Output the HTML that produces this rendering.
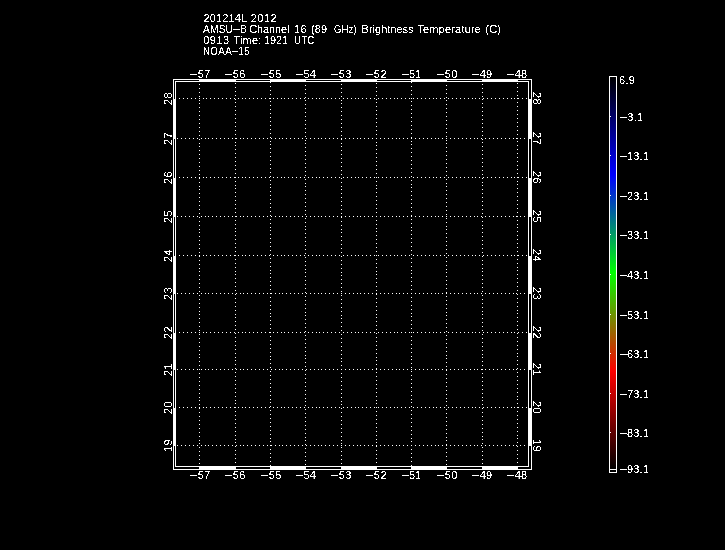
<!DOCTYPE html>
<html><head><meta charset="utf-8"><title>AMSU-B Channel 16 (89 GHz) Brightness Temperature</title>
<style>
html,body{margin:0;padding:0;background:#000;}
body{width:725px;height:550px;position:relative;overflow:hidden;color:#fff;
 font-family:"Liberation Sans",sans-serif;font-size:11px;line-height:11px;}
div,span{position:absolute;white-space:nowrap;}
#tx{left:0;top:0;width:725px;height:550px;filter:url(#th);will-change:transform;}
.w{background:#fff;}
.t{left:0;height:11px;}
.t>span{top:0;transform-origin:0 0;}
span.m{position:static;display:inline-block;width:7.4px;text-align:center;letter-spacing:0;transform:translateY(-1.5px) scaleX(2.6);}
.xl{height:11px;transform-origin:0 0;}
.yl{width:40px;height:11px;text-align:center;font-size:11px;letter-spacing:0.3px;}
.cl{height:11px;transform-origin:0 0;}
</style></head><body>
<svg width="0" height="0" style="position:absolute"><defs><filter id="th" x="0" y="0" width="100%" height="100%" color-interpolation-filters="sRGB"><feComponentTransfer><feFuncR type="discrete" tableValues="1 1"/><feFuncG type="discrete" tableValues="1 1"/><feFuncB type="discrete" tableValues="1 1"/><feFuncA type="linear" slope="200" intercept="-100.00"/></feComponentTransfer></filter></defs></svg>
<svg width="725" height="550" viewBox="0 0 725 550" style="position:absolute;left:0;top:0" shape-rendering="crispEdges"><path fill="none" stroke="#fff" stroke-width="1" stroke-linecap="square" d="M199.5 84.5h0m0 4h0m0 4h0m0 4h0m0 4h0m0 3h0m0 4h0m0 4h0m0 4h0m0 4h0m0 4h0m0 4h0m0 4h0m0 4h0m0 4h0m0 4h0m0 3h0m0 4h0m0 4h0m0 4h0m0 4h0m0 4h0m0 4h0m0 4h0m0 4h0m0 4h0m0 4h0m0 3h0m0 4h0m0 4h0m0 4h0m0 4h0m0 4h0m0 4h0m0 4h0m0 4h0m0 4h0m0 4h0m0 3h0m0 4h0m0 4h0m0 4h0m0 4h0m0 4h0m0 4h0m0 4h0m0 4h0m0 4h0m0 3h0m0 4h0m0 4h0m0 4h0m0 4h0m0 4h0m0 4h0m0 4h0m0 4h0m0 4h0m0 4h0m0 3h0m0 4h0m0 4h0m0 4h0m0 4h0m0 4h0m0 4h0m0 4h0m0 4h0m0 4h0m0 4h0m0 3h0m0 4h0m0 4h0m0 4h0m0 4h0m0 4h0m0 4h0m0 4h0m0 4h0m0 4h0m0 4h0m0 3h0m0 4h0m0 4h0m0 4h0m0 4h0m0 4h0m0 4h0m0 4h0m0 4h0m0 4h0m0 4h0m0 3h0m0 4h0m0 4h0m0 4h0m0 4h0m0 4h0M235.5 83.5h0m0 4h0m0 4h0m0 4h0m0 4h0m0 3h0m0 4h0m0 4h0m0 4h0m0 4h0m0 4h0m0 4h0m0 4h0m0 4h0m0 4h0m0 4h0m0 3h0m0 4h0m0 4h0m0 4h0m0 4h0m0 4h0m0 4h0m0 4h0m0 4h0m0 4h0m0 4h0m0 3h0m0 4h0m0 4h0m0 4h0m0 4h0m0 4h0m0 4h0m0 4h0m0 4h0m0 4h0m0 4h0m0 3h0m0 4h0m0 4h0m0 4h0m0 4h0m0 4h0m0 4h0m0 4h0m0 4h0m0 4h0m0 4h0m0 3h0m0 4h0m0 4h0m0 4h0m0 4h0m0 4h0m0 4h0m0 4h0m0 4h0m0 4h0m0 4h0m0 3h0m0 4h0m0 4h0m0 4h0m0 4h0m0 4h0m0 4h0m0 4h0m0 4h0m0 4h0m0 4h0m0 3h0m0 4h0m0 4h0m0 4h0m0 4h0m0 4h0m0 4h0m0 4h0m0 4h0m0 4h0m0 4h0m0 3h0m0 4h0m0 4h0m0 4h0m0 4h0m0 4h0m0 4h0m0 4h0m0 4h0m0 4h0m0 3h0m0 4h0m0 4h0m0 4h0m0 4h0m0 4h0M270.5 82.5h0m0 4h0m0 4h0m0 4h0m0 4h0m0 3h0m0 4h0m0 4h0m0 4h0m0 4h0m0 4h0m0 4h0m0 4h0m0 4h0m0 4h0m0 4h0m0 3h0m0 4h0m0 4h0m0 4h0m0 4h0m0 4h0m0 4h0m0 4h0m0 4h0m0 4h0m0 4h0m0 3h0m0 4h0m0 4h0m0 4h0m0 4h0m0 4h0m0 4h0m0 4h0m0 4h0m0 4h0m0 4h0m0 3h0m0 4h0m0 4h0m0 4h0m0 4h0m0 4h0m0 4h0m0 4h0m0 4h0m0 4h0m0 4h0m0 3h0m0 4h0m0 4h0m0 4h0m0 4h0m0 4h0m0 4h0m0 4h0m0 4h0m0 4h0m0 4h0m0 3h0m0 4h0m0 4h0m0 4h0m0 4h0m0 4h0m0 4h0m0 4h0m0 4h0m0 4h0m0 4h0m0 3h0m0 4h0m0 4h0m0 4h0m0 4h0m0 4h0m0 4h0m0 4h0m0 4h0m0 4h0m0 4h0m0 3h0m0 4h0m0 4h0m0 4h0m0 4h0m0 4h0m0 4h0m0 4h0m0 4h0m0 4h0m0 3h0m0 4h0m0 4h0m0 4h0m0 4h0m0 4h0m0 4h0M305.5 85.5h0m0 4h0m0 4h0m0 4h0m0 3h0m0 4h0m0 4h0m0 4h0m0 4h0m0 4h0m0 4h0m0 4h0m0 4h0m0 4h0m0 4h0m0 3h0m0 4h0m0 4h0m0 4h0m0 4h0m0 4h0m0 4h0m0 4h0m0 4h0m0 4h0m0 4h0m0 3h0m0 4h0m0 4h0m0 4h0m0 4h0m0 4h0m0 4h0m0 4h0m0 4h0m0 4h0m0 4h0m0 3h0m0 4h0m0 4h0m0 4h0m0 4h0m0 4h0m0 4h0m0 4h0m0 4h0m0 4h0m0 4h0m0 3h0m0 4h0m0 4h0m0 4h0m0 4h0m0 4h0m0 4h0m0 4h0m0 4h0m0 4h0m0 4h0m0 3h0m0 4h0m0 4h0m0 4h0m0 4h0m0 4h0m0 4h0m0 4h0m0 4h0m0 4h0m0 4h0m0 3h0m0 4h0m0 4h0m0 4h0m0 4h0m0 4h0m0 4h0m0 4h0m0 4h0m0 4h0m0 4h0m0 3h0m0 4h0m0 4h0m0 4h0m0 4h0m0 4h0m0 4h0m0 4h0m0 4h0m0 4h0m0 3h0m0 4h0m0 4h0m0 4h0m0 4h0m0 4h0m0 4h0M341.5 84.5h0m0 4h0m0 4h0m0 4h0m0 4h0m0 3h0m0 4h0m0 4h0m0 4h0m0 4h0m0 4h0m0 4h0m0 4h0m0 4h0m0 4h0m0 4h0m0 3h0m0 4h0m0 4h0m0 4h0m0 4h0m0 4h0m0 4h0m0 4h0m0 4h0m0 4h0m0 4h0m0 3h0m0 4h0m0 4h0m0 4h0m0 4h0m0 4h0m0 4h0m0 4h0m0 4h0m0 4h0m0 4h0m0 3h0m0 4h0m0 4h0m0 4h0m0 4h0m0 4h0m0 4h0m0 4h0m0 4h0m0 4h0m0 4h0m0 3h0m0 4h0m0 4h0m0 4h0m0 4h0m0 4h0m0 4h0m0 4h0m0 4h0m0 4h0m0 4h0m0 3h0m0 4h0m0 4h0m0 4h0m0 4h0m0 4h0m0 4h0m0 4h0m0 4h0m0 4h0m0 4h0m0 3h0m0 4h0m0 4h0m0 4h0m0 4h0m0 4h0m0 4h0m0 4h0m0 4h0m0 4h0m0 4h0m0 3h0m0 4h0m0 4h0m0 4h0m0 4h0m0 4h0m0 4h0m0 4h0m0 4h0m0 4h0m0 3h0m0 4h0m0 4h0m0 4h0m0 4h0m0 4h0M376.5 83.5h0m0 4h0m0 4h0m0 4h0m0 4h0m0 3h0m0 4h0m0 4h0m0 4h0m0 4h0m0 4h0m0 4h0m0 4h0m0 4h0m0 4h0m0 4h0m0 3h0m0 4h0m0 4h0m0 4h0m0 4h0m0 4h0m0 4h0m0 4h0m0 4h0m0 4h0m0 4h0m0 3h0m0 4h0m0 4h0m0 4h0m0 4h0m0 4h0m0 4h0m0 4h0m0 4h0m0 4h0m0 4h0m0 3h0m0 4h0m0 4h0m0 4h0m0 4h0m0 4h0m0 4h0m0 4h0m0 4h0m0 4h0m0 4h0m0 3h0m0 4h0m0 4h0m0 4h0m0 4h0m0 4h0m0 4h0m0 4h0m0 4h0m0 4h0m0 4h0m0 3h0m0 4h0m0 4h0m0 4h0m0 4h0m0 4h0m0 4h0m0 4h0m0 4h0m0 4h0m0 4h0m0 3h0m0 4h0m0 4h0m0 4h0m0 4h0m0 4h0m0 4h0m0 4h0m0 4h0m0 4h0m0 4h0m0 3h0m0 4h0m0 4h0m0 4h0m0 4h0m0 4h0m0 4h0m0 4h0m0 4h0m0 4h0m0 3h0m0 4h0m0 4h0m0 4h0m0 4h0m0 4h0M411.5 82.5h0m0 4h0m0 4h0m0 4h0m0 4h0m0 3h0m0 4h0m0 4h0m0 4h0m0 4h0m0 4h0m0 4h0m0 4h0m0 4h0m0 4h0m0 4h0m0 3h0m0 4h0m0 4h0m0 4h0m0 4h0m0 4h0m0 4h0m0 4h0m0 4h0m0 4h0m0 4h0m0 3h0m0 4h0m0 4h0m0 4h0m0 4h0m0 4h0m0 4h0m0 4h0m0 4h0m0 4h0m0 4h0m0 3h0m0 4h0m0 4h0m0 4h0m0 4h0m0 4h0m0 4h0m0 4h0m0 4h0m0 4h0m0 4h0m0 3h0m0 4h0m0 4h0m0 4h0m0 4h0m0 4h0m0 4h0m0 4h0m0 4h0m0 4h0m0 4h0m0 3h0m0 4h0m0 4h0m0 4h0m0 4h0m0 4h0m0 4h0m0 4h0m0 4h0m0 4h0m0 4h0m0 3h0m0 4h0m0 4h0m0 4h0m0 4h0m0 4h0m0 4h0m0 4h0m0 4h0m0 4h0m0 4h0m0 3h0m0 4h0m0 4h0m0 4h0m0 4h0m0 4h0m0 4h0m0 4h0m0 4h0m0 4h0m0 3h0m0 4h0m0 4h0m0 4h0m0 4h0m0 4h0m0 4h0M446.5 85.5h0m0 4h0m0 4h0m0 4h0m0 3h0m0 4h0m0 4h0m0 4h0m0 4h0m0 4h0m0 4h0m0 4h0m0 4h0m0 4h0m0 4h0m0 3h0m0 4h0m0 4h0m0 4h0m0 4h0m0 4h0m0 4h0m0 4h0m0 4h0m0 4h0m0 4h0m0 3h0m0 4h0m0 4h0m0 4h0m0 4h0m0 4h0m0 4h0m0 4h0m0 4h0m0 4h0m0 4h0m0 3h0m0 4h0m0 4h0m0 4h0m0 4h0m0 4h0m0 4h0m0 4h0m0 4h0m0 4h0m0 4h0m0 3h0m0 4h0m0 4h0m0 4h0m0 4h0m0 4h0m0 4h0m0 4h0m0 4h0m0 4h0m0 4h0m0 3h0m0 4h0m0 4h0m0 4h0m0 4h0m0 4h0m0 4h0m0 4h0m0 4h0m0 4h0m0 4h0m0 3h0m0 4h0m0 4h0m0 4h0m0 4h0m0 4h0m0 4h0m0 4h0m0 4h0m0 4h0m0 4h0m0 3h0m0 4h0m0 4h0m0 4h0m0 4h0m0 4h0m0 4h0m0 4h0m0 4h0m0 4h0m0 3h0m0 4h0m0 4h0m0 4h0m0 4h0m0 4h0m0 4h0M482.5 84.5h0m0 4h0m0 4h0m0 4h0m0 3h0m0 4h0m0 4h0m0 4h0m0 4h0m0 4h0m0 4h0m0 4h0m0 4h0m0 4h0m0 4h0m0 3h0m0 4h0m0 4h0m0 4h0m0 4h0m0 4h0m0 4h0m0 4h0m0 4h0m0 4h0m0 4h0m0 3h0m0 4h0m0 4h0m0 4h0m0 4h0m0 4h0m0 4h0m0 4h0m0 4h0m0 4h0m0 4h0m0 3h0m0 4h0m0 4h0m0 4h0m0 4h0m0 4h0m0 4h0m0 4h0m0 4h0m0 4h0m0 4h0m0 3h0m0 4h0m0 4h0m0 4h0m0 4h0m0 4h0m0 4h0m0 4h0m0 4h0m0 4h0m0 4h0m0 3h0m0 4h0m0 4h0m0 4h0m0 4h0m0 4h0m0 4h0m0 4h0m0 4h0m0 4h0m0 4h0m0 3h0m0 4h0m0 4h0m0 4h0m0 4h0m0 4h0m0 4h0m0 4h0m0 4h0m0 4h0m0 4h0m0 3h0m0 4h0m0 4h0m0 4h0m0 4h0m0 4h0m0 4h0m0 4h0m0 4h0m0 4h0m0 3h0m0 4h0m0 4h0m0 4h0m0 4h0m0 4h0m0 4h0M517.5 83.5h0m0 4h0m0 4h0m0 4h0m0 3h0m0 4h0m0 4h0m0 4h0m0 4h0m0 4h0m0 4h0m0 4h0m0 4h0m0 4h0m0 4h0m0 3h0m0 4h0m0 4h0m0 4h0m0 4h0m0 4h0m0 4h0m0 4h0m0 4h0m0 4h0m0 4h0m0 3h0m0 4h0m0 4h0m0 4h0m0 4h0m0 4h0m0 4h0m0 4h0m0 4h0m0 4h0m0 4h0m0 3h0m0 4h0m0 4h0m0 4h0m0 4h0m0 4h0m0 4h0m0 4h0m0 4h0m0 4h0m0 4h0m0 3h0m0 4h0m0 4h0m0 4h0m0 4h0m0 4h0m0 4h0m0 4h0m0 4h0m0 4h0m0 4h0m0 3h0m0 4h0m0 4h0m0 4h0m0 4h0m0 4h0m0 4h0m0 4h0m0 4h0m0 4h0m0 4h0m0 3h0m0 4h0m0 4h0m0 4h0m0 4h0m0 4h0m0 4h0m0 4h0m0 4h0m0 4h0m0 4h0m0 3h0m0 4h0m0 4h0m0 4h0m0 4h0m0 4h0m0 4h0m0 4h0m0 4h0m0 4h0m0 3h0m0 4h0m0 4h0m0 4h0m0 4h0m0 4h0m0 4h0M179.5 98.5h0m4 0h0m4 0h0m4 0h0m4 0h0m4 0h0m4 0h0m3 0h0m4 0h0m4 0h0m4 0h0m4 0h0m4 0h0m4 0h0m4 0h0m4 0h0m4 0h0m3 0h0m4 0h0m4 0h0m4 0h0m4 0h0m4 0h0m4 0h0m4 0h0m4 0h0m4 0h0m3 0h0m4 0h0m4 0h0m4 0h0m4 0h0m4 0h0m4 0h0m4 0h0m4 0h0m3 0h0m4 0h0m4 0h0m4 0h0m4 0h0m4 0h0m4 0h0m4 0h0m4 0h0m4 0h0m3 0h0m4 0h0m4 0h0m4 0h0m4 0h0m4 0h0m4 0h0m4 0h0m4 0h0m4 0h0m3 0h0m4 0h0m4 0h0m4 0h0m4 0h0m4 0h0m4 0h0m4 0h0m4 0h0m4 0h0m3 0h0m4 0h0m4 0h0m4 0h0m4 0h0m4 0h0m4 0h0m4 0h0m4 0h0m4 0h0m3 0h0m4 0h0m4 0h0m4 0h0m4 0h0m4 0h0m4 0h0m4 0h0m4 0h0m4 0h0m3 0h0m4 0h0m4 0h0m4 0h0M177.5 138.5h0m4 0h0m4 0h0m4 0h0m4 0h0m4 0h0m4 0h0m4 0h0m3 0h0m4 0h0m4 0h0m4 0h0m4 0h0m4 0h0m4 0h0m4 0h0m4 0h0m3 0h0m4 0h0m4 0h0m4 0h0m4 0h0m4 0h0m4 0h0m4 0h0m4 0h0m4 0h0m3 0h0m4 0h0m4 0h0m4 0h0m4 0h0m4 0h0m4 0h0m4 0h0m4 0h0m4 0h0m3 0h0m4 0h0m4 0h0m4 0h0m4 0h0m4 0h0m4 0h0m4 0h0m4 0h0m4 0h0m3 0h0m4 0h0m4 0h0m4 0h0m4 0h0m4 0h0m4 0h0m4 0h0m4 0h0m4 0h0m3 0h0m4 0h0m4 0h0m4 0h0m4 0h0m4 0h0m4 0h0m4 0h0m4 0h0m4 0h0m3 0h0m4 0h0m4 0h0m4 0h0m4 0h0m4 0h0m4 0h0m4 0h0m4 0h0m4 0h0m3 0h0m4 0h0m4 0h0m4 0h0m4 0h0m4 0h0m4 0h0m4 0h0m4 0h0m4 0h0m3 0h0m4 0h0m4 0h0M179.5 177.5h0m4 0h0m4 0h0m4 0h0m4 0h0m4 0h0m4 0h0m3 0h0m4 0h0m4 0h0m4 0h0m4 0h0m4 0h0m4 0h0m4 0h0m4 0h0m4 0h0m3 0h0m4 0h0m4 0h0m4 0h0m4 0h0m4 0h0m4 0h0m4 0h0m4 0h0m4 0h0m3 0h0m4 0h0m4 0h0m4 0h0m4 0h0m4 0h0m4 0h0m4 0h0m4 0h0m3 0h0m4 0h0m4 0h0m4 0h0m4 0h0m4 0h0m4 0h0m4 0h0m4 0h0m4 0h0m3 0h0m4 0h0m4 0h0m4 0h0m4 0h0m4 0h0m4 0h0m4 0h0m4 0h0m4 0h0m3 0h0m4 0h0m4 0h0m4 0h0m4 0h0m4 0h0m4 0h0m4 0h0m4 0h0m4 0h0m3 0h0m4 0h0m4 0h0m4 0h0m4 0h0m4 0h0m4 0h0m4 0h0m4 0h0m4 0h0m3 0h0m4 0h0m4 0h0m4 0h0m4 0h0m4 0h0m4 0h0m4 0h0m4 0h0m4 0h0m3 0h0m4 0h0m4 0h0m4 0h0M177.5 216.5h0m4 0h0m4 0h0m4 0h0m4 0h0m4 0h0m4 0h0m4 0h0m3 0h0m4 0h0m4 0h0m4 0h0m4 0h0m4 0h0m4 0h0m4 0h0m4 0h0m3 0h0m4 0h0m4 0h0m4 0h0m4 0h0m4 0h0m4 0h0m4 0h0m4 0h0m4 0h0m3 0h0m4 0h0m4 0h0m4 0h0m4 0h0m4 0h0m4 0h0m4 0h0m4 0h0m4 0h0m3 0h0m4 0h0m4 0h0m4 0h0m4 0h0m4 0h0m4 0h0m4 0h0m4 0h0m4 0h0m3 0h0m4 0h0m4 0h0m4 0h0m4 0h0m4 0h0m4 0h0m4 0h0m4 0h0m4 0h0m3 0h0m4 0h0m4 0h0m4 0h0m4 0h0m4 0h0m4 0h0m4 0h0m4 0h0m4 0h0m3 0h0m4 0h0m4 0h0m4 0h0m4 0h0m4 0h0m4 0h0m4 0h0m4 0h0m4 0h0m3 0h0m4 0h0m4 0h0m4 0h0m4 0h0m4 0h0m4 0h0m4 0h0m4 0h0m4 0h0m3 0h0m4 0h0m4 0h0M179.5 255.5h0m4 0h0m4 0h0m4 0h0m4 0h0m4 0h0m4 0h0m3 0h0m4 0h0m4 0h0m4 0h0m4 0h0m4 0h0m4 0h0m4 0h0m4 0h0m4 0h0m3 0h0m4 0h0m4 0h0m4 0h0m4 0h0m4 0h0m4 0h0m4 0h0m4 0h0m4 0h0m3 0h0m4 0h0m4 0h0m4 0h0m4 0h0m4 0h0m4 0h0m4 0h0m4 0h0m3 0h0m4 0h0m4 0h0m4 0h0m4 0h0m4 0h0m4 0h0m4 0h0m4 0h0m4 0h0m3 0h0m4 0h0m4 0h0m4 0h0m4 0h0m4 0h0m4 0h0m4 0h0m4 0h0m4 0h0m3 0h0m4 0h0m4 0h0m4 0h0m4 0h0m4 0h0m4 0h0m4 0h0m4 0h0m4 0h0m3 0h0m4 0h0m4 0h0m4 0h0m4 0h0m4 0h0m4 0h0m4 0h0m4 0h0m4 0h0m3 0h0m4 0h0m4 0h0m4 0h0m4 0h0m4 0h0m4 0h0m4 0h0m4 0h0m4 0h0m3 0h0m4 0h0m4 0h0m4 0h0M177.5 293.5h0m4 0h0m4 0h0m4 0h0m4 0h0m4 0h0m4 0h0m4 0h0m3 0h0m4 0h0m4 0h0m4 0h0m4 0h0m4 0h0m4 0h0m4 0h0m4 0h0m3 0h0m4 0h0m4 0h0m4 0h0m4 0h0m4 0h0m4 0h0m4 0h0m4 0h0m4 0h0m3 0h0m4 0h0m4 0h0m4 0h0m4 0h0m4 0h0m4 0h0m4 0h0m4 0h0m4 0h0m3 0h0m4 0h0m4 0h0m4 0h0m4 0h0m4 0h0m4 0h0m4 0h0m4 0h0m4 0h0m3 0h0m4 0h0m4 0h0m4 0h0m4 0h0m4 0h0m4 0h0m4 0h0m4 0h0m4 0h0m3 0h0m4 0h0m4 0h0m4 0h0m4 0h0m4 0h0m4 0h0m4 0h0m4 0h0m4 0h0m3 0h0m4 0h0m4 0h0m4 0h0m4 0h0m4 0h0m4 0h0m4 0h0m4 0h0m4 0h0m3 0h0m4 0h0m4 0h0m4 0h0m4 0h0m4 0h0m4 0h0m4 0h0m4 0h0m4 0h0m3 0h0m4 0h0m4 0h0M179.5 332.5h0m4 0h0m4 0h0m4 0h0m4 0h0m4 0h0m4 0h0m3 0h0m4 0h0m4 0h0m4 0h0m4 0h0m4 0h0m4 0h0m4 0h0m4 0h0m4 0h0m3 0h0m4 0h0m4 0h0m4 0h0m4 0h0m4 0h0m4 0h0m4 0h0m4 0h0m4 0h0m3 0h0m4 0h0m4 0h0m4 0h0m4 0h0m4 0h0m4 0h0m4 0h0m4 0h0m3 0h0m4 0h0m4 0h0m4 0h0m4 0h0m4 0h0m4 0h0m4 0h0m4 0h0m4 0h0m3 0h0m4 0h0m4 0h0m4 0h0m4 0h0m4 0h0m4 0h0m4 0h0m4 0h0m4 0h0m3 0h0m4 0h0m4 0h0m4 0h0m4 0h0m4 0h0m4 0h0m4 0h0m4 0h0m4 0h0m3 0h0m4 0h0m4 0h0m4 0h0m4 0h0m4 0h0m4 0h0m4 0h0m4 0h0m4 0h0m3 0h0m4 0h0m4 0h0m4 0h0m4 0h0m4 0h0m4 0h0m4 0h0m4 0h0m4 0h0m3 0h0m4 0h0m4 0h0m4 0h0M177.5 369.5h0m4 0h0m4 0h0m4 0h0m4 0h0m4 0h0m4 0h0m4 0h0m3 0h0m4 0h0m4 0h0m4 0h0m4 0h0m4 0h0m4 0h0m4 0h0m4 0h0m3 0h0m4 0h0m4 0h0m4 0h0m4 0h0m4 0h0m4 0h0m4 0h0m4 0h0m4 0h0m3 0h0m4 0h0m4 0h0m4 0h0m4 0h0m4 0h0m4 0h0m4 0h0m4 0h0m4 0h0m3 0h0m4 0h0m4 0h0m4 0h0m4 0h0m4 0h0m4 0h0m4 0h0m4 0h0m4 0h0m3 0h0m4 0h0m4 0h0m4 0h0m4 0h0m4 0h0m4 0h0m4 0h0m4 0h0m4 0h0m3 0h0m4 0h0m4 0h0m4 0h0m4 0h0m4 0h0m4 0h0m4 0h0m4 0h0m4 0h0m3 0h0m4 0h0m4 0h0m4 0h0m4 0h0m4 0h0m4 0h0m4 0h0m4 0h0m4 0h0m3 0h0m4 0h0m4 0h0m4 0h0m4 0h0m4 0h0m4 0h0m4 0h0m4 0h0m4 0h0m3 0h0m4 0h0m4 0h0M179.5 407.5h0m4 0h0m4 0h0m4 0h0m4 0h0m4 0h0m4 0h0m3 0h0m4 0h0m4 0h0m4 0h0m4 0h0m4 0h0m4 0h0m4 0h0m4 0h0m4 0h0m3 0h0m4 0h0m4 0h0m4 0h0m4 0h0m4 0h0m4 0h0m4 0h0m4 0h0m4 0h0m3 0h0m4 0h0m4 0h0m4 0h0m4 0h0m4 0h0m4 0h0m4 0h0m4 0h0m3 0h0m4 0h0m4 0h0m4 0h0m4 0h0m4 0h0m4 0h0m4 0h0m4 0h0m4 0h0m3 0h0m4 0h0m4 0h0m4 0h0m4 0h0m4 0h0m4 0h0m4 0h0m4 0h0m4 0h0m3 0h0m4 0h0m4 0h0m4 0h0m4 0h0m4 0h0m4 0h0m4 0h0m4 0h0m4 0h0m3 0h0m4 0h0m4 0h0m4 0h0m4 0h0m4 0h0m4 0h0m4 0h0m4 0h0m4 0h0m3 0h0m4 0h0m4 0h0m4 0h0m4 0h0m4 0h0m4 0h0m4 0h0m4 0h0m4 0h0m3 0h0m4 0h0m4 0h0m4 0h0M177.5 445.5h0m4 0h0m4 0h0m4 0h0m4 0h0m4 0h0m4 0h0m4 0h0m3 0h0m4 0h0m4 0h0m4 0h0m4 0h0m4 0h0m4 0h0m4 0h0m4 0h0m3 0h0m4 0h0m4 0h0m4 0h0m4 0h0m4 0h0m4 0h0m4 0h0m4 0h0m4 0h0m3 0h0m4 0h0m4 0h0m4 0h0m4 0h0m4 0h0m4 0h0m4 0h0m4 0h0m4 0h0m3 0h0m4 0h0m4 0h0m4 0h0m4 0h0m4 0h0m4 0h0m4 0h0m4 0h0m4 0h0m3 0h0m4 0h0m4 0h0m4 0h0m4 0h0m4 0h0m4 0h0m4 0h0m4 0h0m4 0h0m3 0h0m4 0h0m4 0h0m4 0h0m4 0h0m4 0h0m4 0h0m4 0h0m4 0h0m4 0h0m3 0h0m4 0h0m4 0h0m4 0h0m4 0h0m4 0h0m4 0h0m4 0h0m4 0h0m4 0h0m3 0h0m4 0h0m4 0h0m4 0h0m4 0h0m4 0h0m4 0h0m4 0h0m4 0h0m4 0h0m3 0h0m4 0h0m4 0h0"/></svg>
<div class="w" style="left:173px;top:79px;width:359px;height:1px"></div>
<div class="w" style="left:175px;top:81px;width:354px;height:1px"></div>
<div class="w" style="left:173px;top:469px;width:359px;height:1px"></div>
<div class="w" style="left:175px;top:466px;width:354px;height:1px"></div>
<div class="w" style="left:173px;top:79px;width:1px;height:391px"></div>
<div class="w" style="left:175px;top:81px;width:1px;height:386px"></div>
<div class="w" style="left:531px;top:79px;width:1px;height:391px"></div>
<div class="w" style="left:528px;top:81px;width:1px;height:386px"></div>
<div class="w" style="left:199px;top:79px;width:37px;height:3px"></div>
<div class="w" style="left:199px;top:466px;width:37px;height:4px"></div>
<div class="w" style="left:173px;top:99px;width:3px;height:40px"></div>
<div class="w" style="left:528px;top:99px;width:4px;height:40px"></div>
<div class="w" style="left:270px;top:79px;width:36px;height:3px"></div>
<div class="w" style="left:270px;top:466px;width:36px;height:4px"></div>
<div class="w" style="left:173px;top:178px;width:3px;height:39px"></div>
<div class="w" style="left:528px;top:178px;width:4px;height:39px"></div>
<div class="w" style="left:341px;top:79px;width:36px;height:3px"></div>
<div class="w" style="left:341px;top:466px;width:36px;height:4px"></div>
<div class="w" style="left:173px;top:256px;width:3px;height:38px"></div>
<div class="w" style="left:528px;top:256px;width:4px;height:38px"></div>
<div class="w" style="left:411px;top:79px;width:36px;height:3px"></div>
<div class="w" style="left:411px;top:466px;width:36px;height:4px"></div>
<div class="w" style="left:173px;top:333px;width:3px;height:37px"></div>
<div class="w" style="left:528px;top:333px;width:4px;height:37px"></div>
<div class="w" style="left:482px;top:79px;width:36px;height:3px"></div>
<div class="w" style="left:482px;top:466px;width:36px;height:4px"></div>
<div class="w" style="left:173px;top:408px;width:3px;height:38px"></div>
<div class="w" style="left:528px;top:408px;width:4px;height:38px"></div>
<div style="left:610px;top:77px;width:6px;height:392px;background:linear-gradient(to bottom,#000 0%,#00f 25%,#0f0 50%,#f00 75%,#000 100%)"></div>
<div class="w" style="left:609px;top:76px;width:1px;height:397px"></div>
<div class="w" style="left:616px;top:76px;width:1px;height:397px"></div>
<div class="w" style="left:609px;top:76px;width:8px;height:1px"></div>
<div class="w" style="left:609px;top:472px;width:8px;height:1px"></div>
<div class="w" style="left:609px;top:469px;width:8px;height:1px"></div>
<div class="w" style="left:610px;top:116px;width:1px;height:1px"></div>
<div class="w" style="left:610px;top:155px;width:1px;height:1px"></div>
<div class="w" style="left:610px;top:195px;width:1px;height:1px"></div>
<div class="w" style="left:610px;top:234px;width:1px;height:1px"></div>
<div class="w" style="left:610px;top:274px;width:1px;height:1px"></div>
<div class="w" style="left:610px;top:314px;width:1px;height:1px"></div>
<div class="w" style="left:610px;top:353px;width:1px;height:1px"></div>
<div class="w" style="left:610px;top:393px;width:1px;height:1px"></div>
<div class="w" style="left:610px;top:432px;width:1px;height:1px"></div>
<div id="tx">
<div class="t" style="top:13.0px"><span id="t0_0" style="left:203.60px;letter-spacing:0.100px">201214L</span> <span id="t0_1" style="left:250.70px;letter-spacing:0.500px">2012</span></div>
<div class="t" style="top:24.0px"><span id="t1_0" style="left:202.60px;letter-spacing:0.250px;transform:scaleX(0.9200)">AMSU<span class="m">-</span>B</span> <span id="t1_1" style="left:249.20px;letter-spacing:-0.118px">Channel</span> <span id="t1_2" style="left:294.10px;letter-spacing:0.200px">16</span> <span id="t1_3" style="left:310.90px;letter-spacing:0.200px">(89</span> <span id="t1_4" style="left:333.60px;letter-spacing:0.250px;transform:scaleX(0.8600)">GHz)</span> <span id="t1_5" style="left:361.60px;letter-spacing:0.000px">Brightness</span> <span id="t1_6" style="left:417.20px;letter-spacing:0.200px">Temperature</span> <span id="t1_7" style="left:485.30px;letter-spacing:0.200px">(C)</span></div>
<div class="t" style="top:35.0px"><span id="t2_0" style="left:203.20px;letter-spacing:0.500px">0913</span> <span id="t2_1" style="left:233.40px;letter-spacing:0.200px">Time:</span> <span id="t2_2" style="left:263.90px;letter-spacing:-0.118px">1921</span> <span id="t2_3" style="left:293.60px;letter-spacing:0.250px;transform:scaleX(0.8800)">UTC</span></div>
<div class="t" style="top:46.0px"><span id="t3_0" style="left:202.60px;letter-spacing:0.250px;transform:scaleX(0.9000)">NOAA<span class="m">-</span>15</span></div>
<div class="xl" id="xt0" style="top:69.0px;left:190.30px;letter-spacing:0.2000px"><span class="m">-</span>57</div>
<div class="xl" id="xb0" style="top:470.0px;left:190.30px;letter-spacing:0.2000px"><span class="m">-</span>57</div>
<div class="xl" id="xt1" style="top:69.0px;left:225.40px;letter-spacing:0.3000px"><span class="m">-</span>56</div>
<div class="xl" id="xb1" style="top:470.0px;left:225.40px;letter-spacing:0.3000px"><span class="m">-</span>56</div>
<div class="xl" id="xt2" style="top:69.0px;left:261.40px;letter-spacing:0.3000px"><span class="m">-</span>55</div>
<div class="xl" id="xb2" style="top:470.0px;left:261.40px;letter-spacing:0.3000px"><span class="m">-</span>55</div>
<div class="xl" id="xt3" style="top:69.0px;left:296.00px;letter-spacing:0.2000px"><span class="m">-</span>54</div>
<div class="xl" id="xb3" style="top:470.0px;left:296.00px;letter-spacing:0.2000px"><span class="m">-</span>54</div>
<div class="xl" id="xt4" style="top:69.0px;left:331.40px;letter-spacing:0.3000px"><span class="m">-</span>53</div>
<div class="xl" id="xb4" style="top:470.0px;left:331.40px;letter-spacing:0.3000px"><span class="m">-</span>53</div>
<div class="xl" id="xt5" style="top:69.0px;left:366.40px;letter-spacing:0.5000px"><span class="m">-</span>52</div>
<div class="xl" id="xb5" style="top:470.0px;left:366.40px;letter-spacing:0.5000px"><span class="m">-</span>52</div>
<div class="xl" id="xt6" style="top:69.0px;left:401.50px;letter-spacing:0.1000px"><span class="m">-</span>51</div>
<div class="xl" id="xb6" style="top:470.0px;left:401.50px;letter-spacing:0.1000px"><span class="m">-</span>51</div>
<div class="xl" id="xt7" style="top:69.0px;left:437.40px;letter-spacing:0.3000px"><span class="m">-</span>50</div>
<div class="xl" id="xb7" style="top:470.0px;left:437.40px;letter-spacing:0.3000px"><span class="m">-</span>50</div>
<div class="xl" id="xt8" style="top:69.0px;left:472.30px;letter-spacing:0.2000px"><span class="m">-</span>49</div>
<div class="xl" id="xb8" style="top:470.0px;left:472.30px;letter-spacing:0.2000px"><span class="m">-</span>49</div>
<div class="xl" id="xt9" style="top:69.0px;left:507.30px;letter-spacing:0.2000px"><span class="m">-</span>48</div>
<div class="xl" id="xb9" style="top:470.0px;left:507.30px;letter-spacing:0.2000px"><span class="m">-</span>48</div>
<div class="yl" id="yl0" style="left:147.5px;top:93.0px;transform:rotate(-90deg)">28</div>
<div class="yl" id="yr0" style="left:515.7px;top:93.0px;transform:rotate(90deg)">28</div>
<div class="yl" id="yl1" style="left:147.5px;top:133.0px;transform:rotate(-90deg)">27</div>
<div class="yl" id="yr1" style="left:515.7px;top:133.0px;transform:rotate(90deg)">27</div>
<div class="yl" id="yl2" style="left:147.5px;top:172.0px;transform:rotate(-90deg)">26</div>
<div class="yl" id="yr2" style="left:515.7px;top:172.0px;transform:rotate(90deg)">26</div>
<div class="yl" id="yl3" style="left:147.5px;top:211.0px;transform:rotate(-90deg)">25</div>
<div class="yl" id="yr3" style="left:515.7px;top:211.0px;transform:rotate(90deg)">25</div>
<div class="yl" id="yl4" style="left:147.5px;top:250.0px;transform:rotate(-90deg)">24</div>
<div class="yl" id="yr4" style="left:515.7px;top:250.0px;transform:rotate(90deg)">24</div>
<div class="yl" id="yl5" style="left:147.5px;top:288.0px;transform:rotate(-90deg)">23</div>
<div class="yl" id="yr5" style="left:515.7px;top:288.0px;transform:rotate(90deg)">23</div>
<div class="yl" id="yl6" style="left:147.5px;top:327.0px;transform:rotate(-90deg)">22</div>
<div class="yl" id="yr6" style="left:515.7px;top:327.0px;transform:rotate(90deg)">22</div>
<div class="yl" id="yl7" style="left:147.5px;top:364.0px;transform:rotate(-90deg)">21</div>
<div class="yl" id="yr7" style="left:515.7px;top:364.0px;transform:rotate(90deg)">21</div>
<div class="yl" id="yl8" style="left:147.5px;top:402.0px;transform:rotate(-90deg)">20</div>
<div class="yl" id="yr8" style="left:515.7px;top:402.0px;transform:rotate(90deg)">20</div>
<div class="yl" id="yl9" style="left:147.5px;top:440.0px;transform:rotate(-90deg)">19</div>
<div class="yl" id="yr9" style="left:515.7px;top:440.0px;transform:rotate(90deg)">19</div>
<div class="cl" id="cb0" style="top:75.0px;left:619.10px;letter-spacing:0.2000px">6.9</div>
<div class="cl" id="cb1" style="top:112.0px;left:619.90px;letter-spacing:0.3000px"><span class="m">-</span>3.1</div>
<div class="cl" id="cb2" style="top:151.0px;left:619.60px;letter-spacing:0.2000px"><span class="m">-</span>13.1</div>
<div class="cl" id="cb3" style="top:191.0px;left:619.60px;letter-spacing:0.2000px"><span class="m">-</span>23.1</div>
<div class="cl" id="cb4" style="top:230.0px;left:619.60px;letter-spacing:0.2000px"><span class="m">-</span>33.1</div>
<div class="cl" id="cb5" style="top:270.0px;left:619.60px;letter-spacing:0.2000px"><span class="m">-</span>43.1</div>
<div class="cl" id="cb6" style="top:310.0px;left:619.60px;letter-spacing:0.2000px"><span class="m">-</span>53.1</div>
<div class="cl" id="cb7" style="top:349.0px;left:619.60px;letter-spacing:0.2000px"><span class="m">-</span>63.1</div>
<div class="cl" id="cb8" style="top:389.0px;left:619.60px;letter-spacing:0.2000px"><span class="m">-</span>73.1</div>
<div class="cl" id="cb9" style="top:428.0px;left:619.60px;letter-spacing:0.2000px"><span class="m">-</span>83.1</div>
<div class="cl" id="cb10" style="top:464.0px;left:619.60px;letter-spacing:0.2000px"><span class="m">-</span>93.1</div>
</div>
</body></html>
